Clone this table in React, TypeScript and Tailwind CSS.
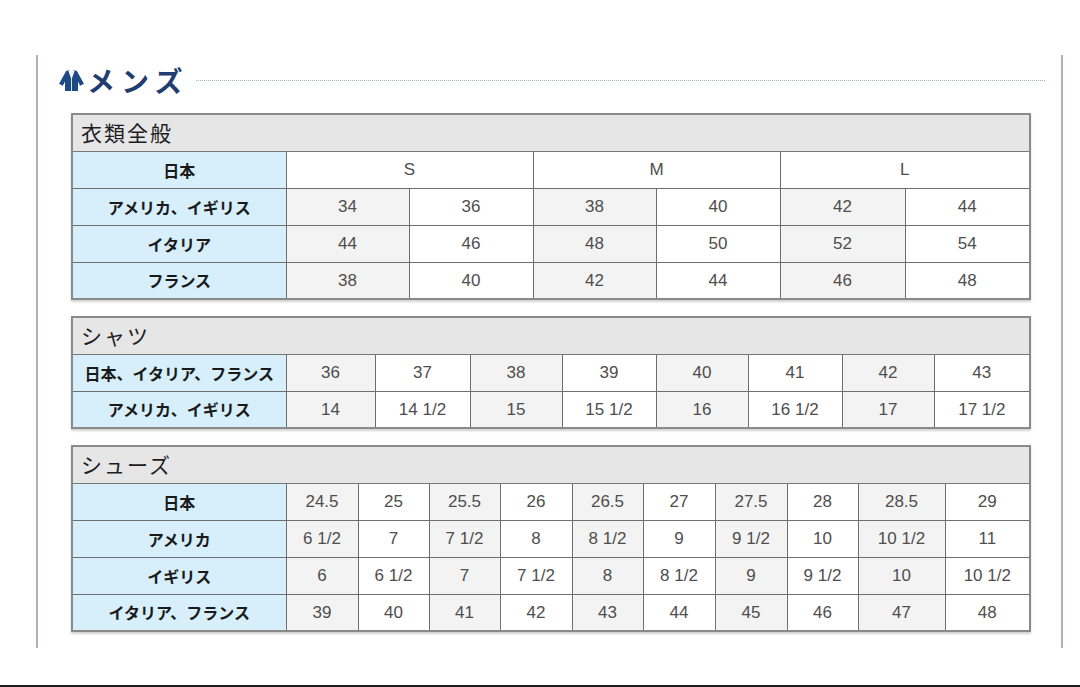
import React from 'react'

type Cell = { v: string; span?: number; gray?: boolean }

interface SizeTableProps {
  title: string
  cols: number[]
  rows: { label: string; cells: Cell[] }[]
}

const jp = { fontFamily: '"Noto Sans CJK JP", "Noto Sans", sans-serif' }
const num = { fontFamily: '"Liberation Sans", "Noto Sans CJK JP", sans-serif' }

// alternate gray / white columns
const alt = (vals: string[]): Cell[] => vals.map((v, i) => ({ v, gray: i % 2 === 0 }))

function SizeTable({ title, cols, rows }: SizeTableProps) {
  return (
    <table
      className="table-fixed border-collapse w-[958px] border-2 border-[#8a8a8a] shadow-[0_2px_2px_rgba(0,0,0,0.18)]"
    >
      <colgroup>
        {cols.map((w, i) => (
          <col key={i} style={{ width: w }} />
        ))}
      </colgroup>
      <tbody>
        <tr className="h-[37px] bg-[#e6e6e6]">
          <td
            colSpan={cols.length}
            className="pl-[8px] text-[21px] leading-none tracking-[2px] text-[#1e1e1e] border border-[#777]"
            style={jp}
          >
            {title}
          </td>
        </tr>
        {rows.map((r, ri) => (
          <tr key={ri} className="h-[37px]">
            <td
              className="bg-[#d6effb] text-center font-bold text-[16px] leading-none text-[#1a1a1a] border border-[#6e6e6e]"
              style={jp}
            >
              {r.label}
            </td>
            {r.cells.map((c, ci) => (
              <td
                key={ci}
                colSpan={c.span}
                className={`text-center text-[17px] leading-none text-[#4e4e4e] border border-[#6e6e6e] ${
                  c.gray ? 'bg-[#f3f3f3]' : 'bg-white'
                }`}
                style={num}
              >
                {c.v}
              </td>
            ))}
          </tr>
        ))}
      </tbody>
    </table>
  )
}

function ShirtIcon() {
  return (
    <svg width="27" height="23" viewBox="0 0 25 22" preserveAspectRatio="none">
      <path
        d="M7.5 2 L10.5 1 L12.5 6 L14.5 1 L17.5 2 L24 14 L20.5 16 L18.5 12 L18.5 21 L6.5 21 L6.5 12 L4.5 16 L1 14 Z"
        fill="#1d4a86"
      />
      <path d="M10.2 1.5 L12.5 8 L14.8 1.5" fill="none" stroke="#fff" strokeWidth="1.4" />
      <path d="M12.5 8 L12.5 21" stroke="#fff" strokeWidth="0.8" />
    </svg>
  )
}

export default function App() {
  return (
    <div className="w-[1080px] h-[687px] bg-white flex flex-col">
      <div className="mt-[55px] ml-[36px] w-[1027px] h-[593px] border-x-2 border-[#bdacb5]">
        <div className="flex items-center pl-[20px] pr-[16px] mt-[12px] h-[26px]">
          <ShirtIcon />
          <span
            className="ml-[2px] text-[28px] leading-none font-bold text-[#1f3d6e] tracking-[6px]"
            style={jp}
          >
            メンズ
          </span>
          <div className="flex-1 ml-[8px] border-t border-dotted border-[#9fb2c6]" />
        </div>

        <div className="ml-[33px] mt-[20px] flex flex-col gap-[16px]">
          <SizeTable
            title="衣類全般"
            cols={[214, 123, 124, 123, 124, 125, 125]}
            rows={[
              {
                label: '日本',
                cells: [
                  { v: 'S', span: 2 },
                  { v: 'M', span: 2 },
                  { v: 'L', span: 2 },
                ],
              },
              { label: 'アメリカ、イギリス', cells: alt(['34', '36', '38', '40', '42', '44']) },
              { label: 'イタリア', cells: alt(['44', '46', '48', '50', '52', '54']) },
              { label: 'フランス', cells: alt(['38', '40', '42', '44', '46', '48']) },
            ]}
          />

          <SizeTable
            title="シャツ"
            cols={[214, 89, 95, 92, 94, 92, 94, 92, 96]}
            rows={[
              {
                label: '日本、イタリア、フランス',
                cells: alt(['36', '37', '38', '39', '40', '41', '42', '43']),
              },
              {
                label: 'アメリカ、イギリス',
                cells: alt(['14', '14 1/2', '15', '15 1/2', '16', '16 1/2', '17', '17 1/2']),
              },
            ]}
          />

          <SizeTable
            title="シューズ"
            cols={[214, 72, 71, 71, 72, 71, 72, 72, 71, 87, 85]}
            rows={[
              {
                label: '日本',
                cells: alt(['24.5', '25', '25.5', '26', '26.5', '27', '27.5', '28', '28.5', '29']),
              },
              {
                label: 'アメリカ',
                cells: alt(['6 1/2', '7', '7 1/2', '8', '8 1/2', '9', '9 1/2', '10', '10 1/2', '11']),
              },
              {
                label: 'イギリス',
                cells: alt(['6', '6 1/2', '7', '7 1/2', '8', '8 1/2', '9', '9 1/2', '10', '10 1/2']),
              },
              {
                label: 'イタリア、フランス',
                cells: alt(['39', '40', '41', '42', '43', '44', '45', '46', '47', '48']),
              },
            ]}
          />
        </div>
      </div>
      <div className="mt-auto h-[2px] bg-[#1c1c1c]" />
    </div>
  )
}
